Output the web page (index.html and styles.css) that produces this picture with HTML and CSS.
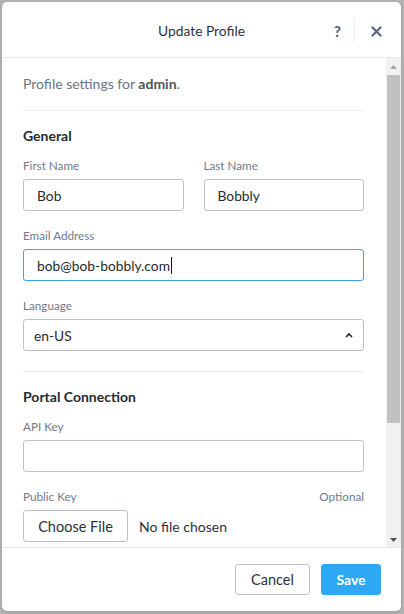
FILE: index.html
```html
<!DOCTYPE html>
<html>
<head>
<meta charset="utf-8">
<link rel="stylesheet" href="styles.css">
</head>
<body>
<div class="modal">
  <div class="header">
    <div></div>
    <div class="title">Update Profile</div>
    <div class="actions">
      <span class="help">?</span>
      <span class="vsep"></span>
      <svg class="close" width="11" height="11" viewBox="0 0 11 11"><path d="M1.5 1.5 L9.5 9.5 M9.5 1.5 L1.5 9.5" stroke="#5b6577" stroke-width="2.2" stroke-linecap="round"/></svg>
    </div>
  </div>
  <div class="body">
    <div class="content">
      <p class="intro">Profile settings for <b>admin</b>.</p>
      <hr class="sep">
      <h3 class="section">General</h3>
      <div class="row">
        <div class="field">
          <label class="label">First Name</label>
          <input class="input" value="Bob">
        </div>
        <div class="field">
          <label class="label">Last Name</label>
          <input class="input" value="Bobbly">
        </div>
      </div>
      <div class="field">
        <label class="label">Email Address</label>
        <div class="input focus">bob@bob-bobbly.com<span class="caret"></span></div>
      </div>
      <div class="field">
        <label class="label">Language</label>
        <div class="input select"><span>en-US</span>
          <svg width="8" height="5" viewBox="0 0 8 5"><path d="M1 4 L4 1 L7 4" fill="none" stroke="#222" stroke-width="1.6"/></svg>
        </div>
      </div>
      <hr class="sep sep2">
      <h3 class="section">Portal Connection</h3>
      <div class="field">
        <label class="label">API Key</label>
        <input class="input" value="">
      </div>
      <div class="field">
        <div class="label split"><span>Public Key</span><span>Optional</span></div>
        <div class="file"><button class="btn choose">Choose File</button><span class="nofile">No file chosen</span></div>
      </div>
    </div>
    <div class="scrollbar">
      <div class="sb-up"><svg width="7" height="4" viewBox="0 0 7 4"><path d="M0 4 L3.5 0 L7 4 Z" fill="#a3a3a3"/></svg></div>
      <div class="sb-thumb"></div>
      <div class="sb-space"></div>
      <div class="sb-down"><svg width="7" height="4" viewBox="0 0 7 4"><path d="M0 0 L3.5 4 L7 0 Z" fill="#505050"/></svg></div>
    </div>
  </div>
  <div class="footer">
    <button class="btn cancel">Cancel</button>
    <button class="btn save">Save</button>
  </div>
</div>
</body>
</html>
```

FILE: styles.css
```css
* { box-sizing: border-box; }
html, body { margin: 0; padding: 0; }
body {
  background: #b3b3b3;
  font-family: "Lato", "Liberation Sans", sans-serif;
  font-size: 13px;
  color: #262a31;
  width: 404px;
  height: 614px;
  overflow: hidden;
}
.modal {
  margin: 2px;
  width: 399px;
  height: 609px;
  background: #fff;
  border-radius: 5px;
  display: flex;
  flex-direction: column;
  overflow: hidden;
  box-shadow: 0 1px 3px rgba(0,0,0,0.15);
}
.header {
  height: 56px;
  flex: none;
  border-bottom: 1px solid #e6e9ec;
  display: grid;
  grid-template-columns: 1fr auto 1fr;
  align-items: center;
}
.title {
  font-size: 13.8px;
  color: #2d323c;
  padding-top: 2px;
}
.actions {
  display: flex;
  align-items: center;
  justify-content: flex-end;
  padding-right: 19px;
  padding-top: 3px;
}
.help {
  font-weight: 900;
  font-size: 15px;
  color: #5b6577;
}
.vsep {
  width: 1px;
  height: 22px;
  background: #e8eaed;
  margin: 0 16px 0 13px;
}
.close { display: block; }
.body {
  height: 489px;
  flex: none;
  display: flex;
  overflow: hidden;
}
.content {
  flex: 1;
  padding: 17px 22px 0 21px;
  overflow: hidden;
}
.intro {
  margin: 0;
  font-size: 14px;
  line-height: 18px;
  color: #6a7586;
}
.intro b { color: #4d5666; font-weight: 700; }
.sep {
  border: 0;
  border-top: 1px solid #eceef1;
  margin: 17px 0 16px 0;
}
.sep2 { margin-top: 20px; }
.section {
  margin: 0 0 12px 0;
  font-size: 14px;
  font-weight: 700;
  line-height: 18px;
  color: #262a31;
}
.row {
  display: grid;
  grid-template-columns: 1fr 1fr;
  column-gap: 20px;
}
.field {
  display: flex;
  flex-direction: column;
  margin-bottom: 16px;
}
.label {
  font-size: 11.7px;
  line-height: 16px;
  color: #707b8c;
  margin-bottom: 6px;
}
.split { display: flex; justify-content: space-between; }
.input {
  height: 32px;
  border: 1px solid #bcc2cb;
  border-radius: 3px;
  padding: 0 13px;
  font-family: inherit;
  font-size: 13.8px;
  color: #262a31;
  width: 100%;
  outline: none;
  background: #fff;
  display: flex;
  align-items: center;
}
.focus { border-color: #3ea2e6; }
.caret {
  width: 1px;
  height: 17px;
  background: #111;
  margin-left: 1px;
}
.select {
  justify-content: space-between;
  padding: 0 10px 0 10px;
}
.file {
  display: flex;
  align-items: center;
}
.btn {
  height: 32px;
  border: 1px solid #bcc2cb;
  border-radius: 3px;
  background: #fff;
  font-family: inherit;
  font-size: 14px;
  color: #2d323c;
  padding: 0 15px;
  cursor: pointer;
}
.choose { width: 105px; padding: 0; font-size: 14.5px; }
.nofile {
  margin-left: 11px;
  font-size: 14px;
  color: #2d323c;
}
.scrollbar {
  width: 15px;
  flex: none;
  background: #f1f1f1;
  display: flex;
  flex-direction: column;
  align-items: center;
}
.sb-up {
  height: 17px;
  display: flex;
  align-items: center;
  justify-content: center;
}
.sb-thumb {
  width: 13px;
  height: 348px;
  background: #c1c1c1;
}
.sb-space { flex: 1; }
.sb-down {
  height: 15px;
  display: flex;
  align-items: center;
  justify-content: center;
}
.footer {
  flex: 1;
  border-top: 1px solid #e6e9ec;
  display: flex;
  align-items: center;
  justify-content: flex-end;
  gap: 11px;
  padding-right: 20px;
}
.cancel { width: 75px; height: 31px; padding: 0; font-size: 14.5px; }
.save {
  width: 60px;
  height: 31px;
  padding: 0;
  background: #2ea8f2;
  border-color: #2ea8f2;
  color: #fff;
  font-weight: 700;
}
```
